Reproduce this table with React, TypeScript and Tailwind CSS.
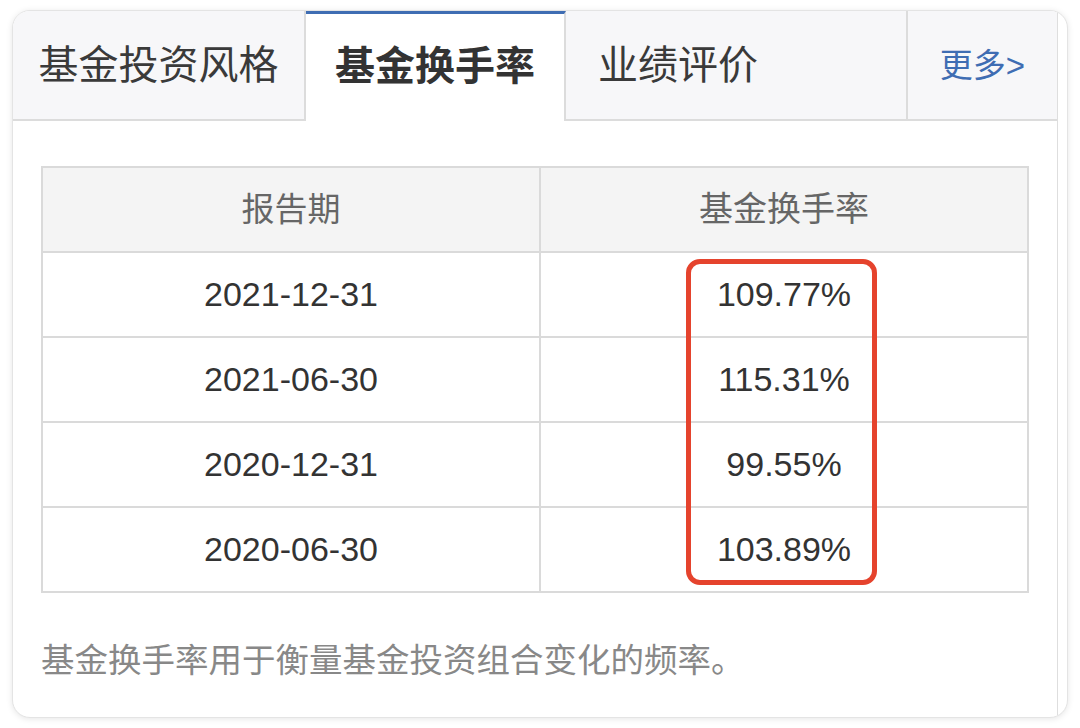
import { Fragment } from "react";

const font = "font-['Liberation_Sans','Noto_Sans_CJK_SC',sans-serif]";

const rows = [
  { date: "2021-12-31", rate: "109.77%" },
  { date: "2021-06-30", rate: "115.31%" },
  { date: "2020-12-31", rate: "99.55%" },
  { date: "2020-06-30", rate: "103.89%" },
];

export default function App() {
  return (
    <div className={`w-[1080px] h-[728px] bg-white pt-[10px] px-[12px] ${font}`}>
      <div className="flex h-[708px] w-[1056px] overflow-hidden rounded-[18px] border border-[#e4e4e4] bg-white shadow-[0_1px_6px_rgba(0,0,0,0.10)]">
        <div className="flex w-[1045px] flex-col border-r border-[#dedede]">
          {/* tabs */}
          <div className="flex h-[110px] shrink-0">
            <div className="flex w-[293px] items-center justify-center border-r-2 border-b-2 border-[#dcdcdc] bg-[#f7f7f9] text-[40px] leading-none text-[#3a3a3a]">
              基金投资风格
            </div>
            <div className="flex w-[260px] items-center justify-center border-t-[3px] border-r-2 border-t-[#3f6db3] border-r-[#dcdcdc] bg-white pb-[3px] text-[40px] font-bold leading-none text-[#333]">
              基金换手率
            </div>
            <div className="flex w-[342px] items-center border-r-2 border-b-2 border-[#dcdcdc] bg-[#f7f7f9] pl-[32px] text-[40px] leading-none text-[#3a3a3a]">
              业绩评价
            </div>
            <div className="flex flex-1 items-center justify-center border-b-2 border-[#dcdcdc] bg-[#f7f7f9] text-[33px] leading-none text-[#3f6db3]">
              更多&gt;
            </div>
          </div>

          {/* table */}
          <div className="relative mx-[28px] mt-[45px] border-l-2 border-t-2 border-[#dadada]">
            <div className="grid grid-cols-[498px_1fr]">
              <div className="flex h-[85px] items-center justify-center border-r-2 border-b-2 border-[#dadada] bg-[#f4f4f4] text-[33px] text-[#666]">
                报告期
              </div>
              <div className="flex h-[85px] items-center justify-center border-r-2 border-b-2 border-[#dadada] bg-[#f4f4f4] text-[34px] text-[#666]">
                基金换手率
              </div>
              {rows.map((r) => (
                <Fragment key={r.date}>
                  <div className="flex h-[85px] items-center justify-center border-r-2 border-b-2 border-[#dadada] text-[34px] text-[#333]">
                    {r.date}
                  </div>
                  <div className="flex h-[85px] items-center justify-center border-r-2 border-b-2 border-[#dadada] text-[34px] text-[#333]">
                    {r.rate}
                  </div>
                </Fragment>
              ))}
            </div>
            <div className="absolute left-[643px] top-[91px] h-[326px] w-[191px] rounded-[14px] border-[5px] border-[#e5432d]" />
          </div>

          <p className="mx-[28px] mt-[44px] text-[33.5px] leading-[48px] text-[#888]">
            基金换手率用于衡量基金投资组合变化的频率。
          </p>
        </div>
      </div>
    </div>
  );
}
